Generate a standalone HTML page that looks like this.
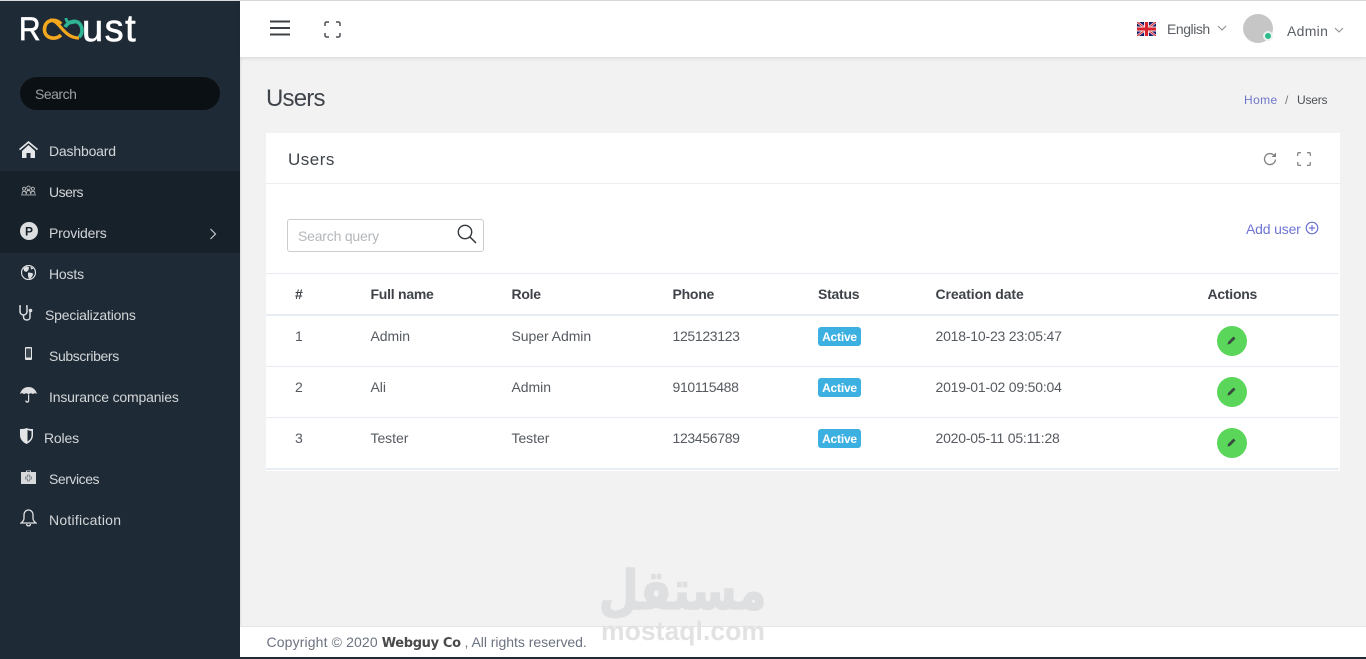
<!DOCTYPE html>
<html><head><meta charset="utf-8"><title>Users</title>
<style>
*{box-sizing:border-box}
html,body{margin:0;padding:0;width:1366px;height:659px;overflow:hidden;background:#f2f2f2;font-family:"Liberation Sans",sans-serif;color:#4b4f55}
.a{position:absolute;white-space:nowrap;line-height:1}
svg{position:absolute;display:block}
.nav{color:#d3d5d7;font-size:14px;letter-spacing:-.18px}
.th{font-size:14px;font-weight:bold;color:#3f4349;letter-spacing:-.25px}
.td{font-size:14px;color:#555a60;letter-spacing:-.05px}
.badge{position:absolute;left:818px;width:43px;height:19px;background:#3cb0e0;border-radius:3px;color:#fff;font-size:12px;font-weight:bold;text-align:center;line-height:20px;letter-spacing:-.2px}
.btn{position:absolute;left:1217px;width:30px;height:30px;border-radius:50%;background:#5ad75a}
.line{position:absolute;left:266px;width:1073px;background:#e8edf3}
</style></head><body>
<div class="a" style="left:0;top:0;width:1366px;height:1px;background:#ddd"></div>
<div class="a" style="left:0;top:1px;width:240px;height:658px;background:#1e2b37;box-shadow:1px 0 2px rgba(0,0,0,.08)"></div>
<div class="a" style="left:0;top:171px;width:240px;height:82px;background:#17212a"></div>
<!-- logo -->
<div class="a" style="left:19px;top:13px;font-size:32px;color:#fff;-webkit-text-stroke:.7px #fff;line-height:32px;transform:scaleX(.93);transform-origin:left top">R</div>
<div class="a" style="left:82px;top:10px;font-size:38px;color:#fff;-webkit-text-stroke:.6px #fff;letter-spacing:1.500px;line-height:38px">ust</div>
<svg style="left:0;top:0" width="100" height="50" viewBox="0 0 100 50"><path d="M61 24C56 18 45 19 44.500 29C44 38 55 41 61 35" fill="none" stroke="#f3a81d" stroke-width="3.600"/><path d="M50 20C60 20 63 38 79 38" fill="none" stroke="#f3a81d" stroke-width="3.200"/><path d="M65 27C69 21 75 20 79 23C83 27 83 34 79 37" fill="none" stroke="#2fb594" stroke-width="3.600"/><path d="M66 18C66 22 70 24 75 22" fill="none" stroke="#2fb594" stroke-width="2.800"/></svg>
<!-- search -->
<div class="a" style="left:20px;top:77px;width:200px;height:33px;border-radius:17px;background:#0b1014"></div>
<div class="a" style="left:35px;top:87px;font-size:14px;color:#99a0a5;letter-spacing:-.5px">Search</div>
<!-- nav -->
<svg style="left:19px;top:141px" width="19" height="17" viewBox="0 0 19 17"><path d="M9.500 0L0 8l1 1.200L9.500 2.200 18 9.200 19 8zM3 10v7h4.500v-5h4v5H16v-7L9.500 4z" fill="#e6e7e8"/></svg>
<div class="a nav" style="left:49px;top:144px">Dashboard</div>
<svg style="left:21px;top:185px" width="15" height="11" viewBox="0 0 17 12"><g fill="none" stroke="#b8babc" stroke-width="1"><circle cx="8.500" cy="3" r="2"/><circle cx="3.500" cy="4" r="1.700"/><circle cx="13.500" cy="4" r="1.700"/><path d="M1 10l1-3h3l1 3M6 10l1-4h3l1 4M11 10l1-3h3l1 3M0 11h17"/></g></svg>
<div class="a nav" style="left:49px;top:185px;letter-spacing:-.5px">Users</div>
<svg style="left:20px;top:222px" width="18" height="18" viewBox="0 0 18 18"><circle cx="9" cy="9" r="9" fill="#dcdddf"/><text x="9" y="13.500" font-family="Liberation Sans" font-weight="bold" font-size="12" fill="#17212a" text-anchor="middle">P</text></svg>
<div class="a nav" style="left:49px;top:226px">Providers</div>
<svg style="left:209px;top:228px" width="8" height="12" viewBox="0 0 8 12"><path d="M1.500 1l5 5-5 5" fill="none" stroke="#c8cacc" stroke-width="1.200"/></svg>
<svg style="left:21px;top:265px" width="15" height="15" viewBox="0 0 15 15"><circle cx="7.500" cy="7.500" r="7" fill="#1e2b37" stroke="#e0e1e3" stroke-width="1.200"/><path d="M2.500 3l3-1.500L8 2 7.500 5 5.500 7 3 6zM7 7.500l4.500.5.500 2-2 3-2 1-1-3zM9.500 1.500l3 2-2.500 1z" fill="#e0e1e3"/></svg>
<div class="a nav" style="left:49px;top:267px">Hosts</div>
<svg style="left:19px;top:305px" width="15" height="16" viewBox="0 0 15 16"><path d="M2 1H1v5c0 3 2 4 3.500 4S8 9 8 6V1H7M4.500 10v2c0 2 1.500 3 3.500 3s3-1.500 3-3V7" fill="none" stroke="#dcdddf" stroke-width="1.500"/><circle cx="11.500" cy="5.500" r="1.800" fill="#dcdddf"/></svg>
<div class="a nav" style="left:45px;top:308px">Specializations</div>
<svg style="left:25px;top:347px" width="7" height="13" viewBox="0 0 7 13"><rect width="7" height="13" rx="1" fill="#e4e5e6"/><rect x="1" y="1.500" width="5" height="9" fill="#3a4650"/></svg>
<div class="a nav" style="left:49px;top:349px;letter-spacing:-.37px">Subscribers</div>
<svg style="left:20px;top:387px" width="17" height="16" viewBox="0 0 17 16"><path d="M8.500 0C4 0 1 3 0 7c1.500-1 3-1 4 .3C5 6 7 6 8.500 7.300 10 6 12 6 13 7.300 14 6 15.500 6 17 7 16 3 13 0 8.500 0zM8 7.500v6c0 1-1.500 1-1.500 0h-1.300c0 3 4 3 4 0v-6z" fill="#dcdddf"/></svg>
<div class="a nav" style="left:49px;top:390px">Insurance companies</div>
<svg style="left:20px;top:428px" width="13" height="16" viewBox="0 0 13 16"><path d="M0 1C2.500 1 4.500 1 6.500 0c2 1 4 1 6.500 1V7c0 4-2.500 7-6.500 9C2.500 14 0 11 0 7z" fill="#e4e5e6"/><path d="M7.500 2c1.200.6 2.500.9 4 1v4c0 3-1.500 5-4 6.500z" fill="#1e2b37"/></svg>
<div class="a nav" style="left:44px;top:431px">Roles</div>
<svg style="left:21px;top:470px" width="15" height="14" viewBox="0 0 15 14"><path d="M5 2V.5h5V2h5v12H0V2zM6 1.200V2h3v-.8z" fill="#d8d9db" fill-rule="evenodd"/><path d="M6.500 5h2v2h2v2h-2v2h-2V9h-2V7h2z" fill="none" stroke="#737a80" stroke-width=".8"/></svg>
<div class="a nav" style="left:49px;top:472px;letter-spacing:-.45px">Services</div>
<svg style="left:20px;top:509px" width="17" height="18" viewBox="0 0 17 18"><path d="M8.500 1C5.500 1 4 3.500 4 6v3c0 2-1.500 4-3 5h15c-1.500-1-3-3-3-5V6c0-2.500-1.500-5-4.500-5zM6.500 15c.3 2.500 3.700 2.500 4 0" fill="none" stroke="#e0e1e3" stroke-width="1.300"/></svg>
<div class="a nav" style="left:49px;top:513px;letter-spacing:.25px">Notification</div>
<!-- header -->
<div class="a" style="left:240px;top:1px;width:1126px;height:56px;background:#fff;box-shadow:0 1px 4px rgba(0,0,0,.12)"></div>
<svg style="left:270px;top:20px" width="20" height="16" viewBox="0 0 20 16"><path d="M0 1.500h20M0 8h20M0 14.500h20" stroke="#3d4145" stroke-width="2"/></svg>
<svg style="left:324px;top:21px" width="17" height="17" viewBox="0 0 17 17"><path d="M1 5V2.500A1.500 1.500 0 0 1 2.500 1H5M12 1h2.500A1.500 1.500 0 0 1 16 2.500V5M16 12v2.500a1.500 1.500 0 0 1-1.500 1.500H12M5 16H2.500A1.500 1.500 0 0 1 1 14.500V12" fill="none" stroke="#4a4e53" stroke-width="1.500"/></svg>
<svg style="left:1137px;top:22px" width="19" height="14" viewBox="0 0 19 14"><rect width="19" height="14" fill="#101c6e"/><path d="M0 0l19 14M19 0L0 14" stroke="#f0d8d8" stroke-width="2.500"/><path d="M0 0l19 14M19 0L0 14" stroke="#d8232f" stroke-width="1"/><path d="M9.500 0v14M0 7h19" stroke="#f2e2e2" stroke-width="5"/><path d="M9.500 0v14M0 7h19" stroke="#d8232f" stroke-width="3"/></svg>
<div class="a" style="left:1167px;top:22px;font-size:14px;color:#5b6066;letter-spacing:-.45px">English</div>
<svg style="left:1217px;top:25px" width="10" height="7" viewBox="0 0 10 7"><path d="M1 1l4 4 4-4" fill="none" stroke="#8a8e92" stroke-width="1"/></svg>
<div class="a" style="left:1243px;top:14px;width:30px;height:29px;border-radius:50%;background:#c6c6c6"></div>
<div class="a" style="left:1263px;top:31px;width:10px;height:10px;border-radius:50%;background:#2dbb8e;border:2px solid #e9f3ef"></div>
<div class="a" style="left:1287px;top:24px;font-size:14px;color:#5b6066;letter-spacing:.3px">Admin</div>
<svg style="left:1334px;top:27px" width="10" height="7" viewBox="0 0 10 7"><path d="M1 1l4 4 4-4" fill="none" stroke="#8a8e92" stroke-width="1"/></svg>
<!-- page title -->
<div class="a" style="left:266px;top:87px;font-size:24px;color:#3f444a;letter-spacing:-.8px">Users</div>
<div class="a" style="left:1244px;top:94px;font-size:12px;color:#6f75c9;letter-spacing:.4px">Home</div>
<div class="a" style="left:1285px;top:94px;font-size:12px;color:#777">/</div>
<div class="a" style="left:1297px;top:94px;font-size:12px;color:#4b4f55;letter-spacing:-.2px">Users</div>
<!-- card -->
<div class="a" style="left:266px;top:133px;width:1074px;height:338px;background:#fff"></div>
<div class="a" style="left:266px;top:183px;width:1074px;height:1px;background:#eee"></div>
<div class="a" style="left:288px;top:151px;font-size:17px;color:#3f444a;letter-spacing:.5px">Users</div>
<svg style="left:1263px;top:152px" width="14" height="14" viewBox="0 0 14 14"><path d="M12.500 7.500A5.500 5.500 0 1 1 10.500 2.800" fill="none" stroke="#7d7f82" stroke-width="1.300"/><path d="M13 .5V5H8.500z" fill="#7d7f82"/></svg>
<svg style="left:1297px;top:152px" width="14" height="14" viewBox="0 0 14 14"><path d="M.7 4V1.500a.8.8 0 0 1 .8-.8H4M10 .7h2.500a.8.8 0 0 1 .8.800V4M13.300 10v2.500a.8.8 0 0 1-.8.800H10M4 13.300H1.500a.8.8 0 0 1-.8-.8V10" fill="none" stroke="#85878a" stroke-width="1.300"/></svg>
<div class="a" style="left:287px;top:219px;width:197px;height:33px;border:1px solid #ccc;border-radius:3px"></div>
<div class="a" style="left:298px;top:229px;font-size:14px;color:#b4b7ba;letter-spacing:-.2px">Search query</div>
<svg style="left:457px;top:224px" width="20" height="20" viewBox="0 0 20 20"><circle cx="8" cy="8" r="6.700" fill="none" stroke="#33373b" stroke-width="1.400"/><path d="M13 13l6 6" stroke="#33373b" stroke-width="1.500"/></svg>
<div class="a" style="left:1246px;top:222px;font-size:14px;color:#6f75d4;letter-spacing:-.17px">Add user</div>
<svg style="left:1305px;top:221px" width="14" height="14" viewBox="0 0 14 14"><circle cx="7" cy="7" r="5.800" fill="none" stroke="#6f75d4" stroke-width="1.200"/><path d="M7 4v6M4 7h6" stroke="#6f75d4" stroke-width="1.200"/></svg>
<!-- table -->
<div class="line" style="top:273px;height:1px"></div>
<div class="line" style="top:314px;height:2px"></div>
<div class="line" style="top:366px;height:1px"></div>
<div class="line" style="top:417px;height:1px"></div>
<div class="line" style="top:468px;height:2px"></div>
<div class="a th" style="left:295px;top:287px">#</div>
<div class="a th" style="left:370.500px;top:287px">Full name</div>
<div class="a th" style="left:511.500px;top:287px">Role</div>
<div class="a th" style="left:672.500px;top:287px">Phone</div>
<div class="a th" style="left:818px;top:287px">Status</div>
<div class="a th" style="left:935.500px;top:287px;letter-spacing:-.1px">Creation date</div>
<div class="a th" style="left:1207.500px;top:287px">Actions</div>

<div class="a td" style="left:295px;top:329px">1</div>
<div class="a td" style="left:370.500px;top:329px">Admin</div>
<div class="a td" style="left:511.500px;top:329px">Super Admin</div>
<div class="a td" style="left:672.500px;top:329px;letter-spacing:-.33px">125123123</div>
<div class="badge" style="top:327px">Active</div>
<div class="a td" style="left:935.500px;top:329px;letter-spacing:-.2px">2018-10-23 23:05:47</div>
<div class="btn" style="top:326px"></div>

<div class="a td" style="left:295px;top:380px">2</div>
<div class="a td" style="left:370.500px;top:380px">Ali</div>
<div class="a td" style="left:511.500px;top:380px">Admin</div>
<div class="a td" style="left:672.500px;top:380px;letter-spacing:-.33px">910115488</div>
<div class="badge" style="top:378px">Active</div>
<div class="a td" style="left:935.500px;top:380px;letter-spacing:-.2px">2019-01-02 09:50:04</div>
<div class="btn" style="top:377px"></div>

<div class="a td" style="left:295px;top:431px">3</div>
<div class="a td" style="left:370.500px;top:431px">Tester</div>
<div class="a td" style="left:511.500px;top:431px">Tester</div>
<div class="a td" style="left:672.500px;top:431px;letter-spacing:-.33px">123456789</div>
<div class="badge" style="top:429px">Active</div>
<div class="a td" style="left:935.500px;top:431px;letter-spacing:-.2px">2020-05-11 05:11:28</div>
<div class="btn" style="top:428px"></div>
<svg style="left:1227px;top:336px" width="9" height="9" viewBox="0 0 9 9"><path d="M6.500.5l2 2-5.500 5.500-2.500.5.5-2.500z" fill="#3a4a40"/></svg>
<svg style="left:1227px;top:387px" width="9" height="9" viewBox="0 0 9 9"><path d="M6.500.5l2 2-5.500 5.500-2.500.5.5-2.500z" fill="#3a4a40"/></svg>
<svg style="left:1227px;top:438px" width="9" height="9" viewBox="0 0 9 9"><path d="M6.500.5l2 2-5.500 5.500-2.500.5.5-2.500z" fill="#3a4a40"/></svg>
<!-- footer -->
<div class="a" style="left:240px;top:626px;width:1126px;height:31px;background:#fff;border-top:1px solid #e4e4e4"></div>
<div class="a" style="left:240px;top:657px;width:1126px;height:2px;background:#1e2b37"></div>
<div class="a" style="left:266.500px;top:635px;font-size:14px;color:#6b7280;letter-spacing:.13px">Copyright © 2020 <b style="color:#4a4a4a;font-family:'DejaVu Sans',sans-serif;font-size:13px;letter-spacing:-.35px">Webguy Co</b><span style="letter-spacing:-.03px"> , All rights reserved.</span></div>
<!-- watermark -->
<div class="a" dir="rtl" style="left:589px;top:556px;width:192px;text-align:center;font-family:'DejaVu Sans',sans-serif;font-weight:bold;font-size:54px;line-height:70px;color:#dedfe0;-webkit-text-stroke:1.500px #dedfe0;transform:scaleX(.85)">مستقل</div>
<div class="a" style="left:601px;top:618px;font-size:26.500px;font-weight:bold;color:#e2e2e2;letter-spacing:.05px">mostaql.com</div>
</body></html>
